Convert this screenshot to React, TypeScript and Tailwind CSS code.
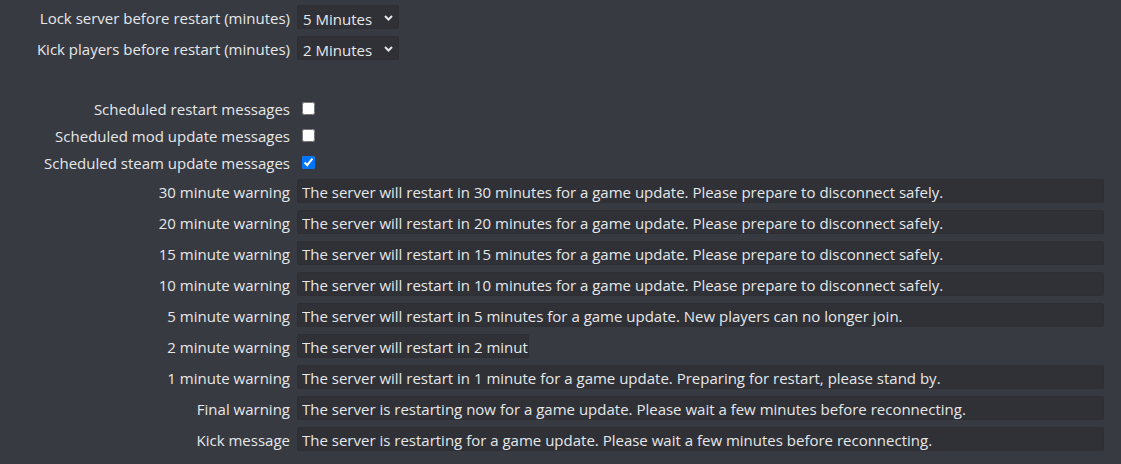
import { useState } from "react";

const font = { fontFamily: '"Open Sans", "Noto Sans", sans-serif' };

const warnings: { label: string; text: string; short?: boolean }[] = [
  { label: "30 minute warning", text: "The server will restart in 30 minutes for a game update. Please prepare to disconnect safely." },
  { label: "20 minute warning", text: "The server will restart in 20 minutes for a game update. Please prepare to disconnect safely." },
  { label: "15 minute warning", text: "The server will restart in 15 minutes for a game update. Please prepare to disconnect safely." },
  { label: "10 minute warning", text: "The server will restart in 10 minutes for a game update. Please prepare to disconnect safely." },
  { label: "5 minute warning", text: "The server will restart in 5 minutes for a game update. New players can no longer join." },
  { label: "2 minute warning", text: "The server will restart in 2 minut", short: true },
  { label: "1 minute warning", text: "The server will restart in 1 minute for a game update. Preparing for restart, please stand by." },
  { label: "Final warning", text: "The server is restarting now for a game update. Please wait a few minutes before reconnecting." },
  { label: "Kick message", text: "The server is restarting for a game update. Please wait a few minutes before reconnecting." },
];

function Row({ label, children, h = "h-6" }: { label: string; children?: React.ReactNode; h?: string }) {
  return (
    <div className={`flex items-center gap-[7px] ${h}`}>
      <label className="w-[290px] shrink-0 text-right whitespace-nowrap pt-[3px]">{label}</label>
      {children}
    </div>
  );
}

function Select({ value, options }: { value: string; options: string[] }) {
  const [v, setV] = useState(value);
  return (
    <div className="relative h-6 w-[102px]">
      <select
        value={v}
        onChange={(e) => setV(e.target.value)}
        className="h-full w-full appearance-none rounded-[2px] border border-[#2d2f34] bg-[#2f3137] pl-[5px] pt-[2px] text-[15px] text-[#e6e7e9] outline-none"
        style={font}
      >
        {options.map((o) => (
          <option key={o}>{o}</option>
        ))}
      </select>
      <svg
        className="pointer-events-none absolute right-[6px] top-[10px]"
        width="9"
        height="6"
        viewBox="0 0 9 6"
        fill="none"
        stroke="#e6e7e9"
        strokeWidth="2"
      >
        <path d="M1 1l3.5 3.5L8 1" />
      </svg>
    </div>
  );
}

export default function App() {
  const [checks, setChecks] = useState([false, false, true]);
  const [texts, setTexts] = useState(warnings.map((w) => w.text));
  const minutes = ["1 Minute", "2 Minutes", "5 Minutes", "10 Minutes", "15 Minutes"];
  const checkLabels = [
    "Scheduled restart messages",
    "Scheduled mod update messages",
    "Scheduled steam update messages",
  ];

  return (
    <div className="min-h-[464px] w-full bg-[#373a41] pt-[5px] text-[15px] text-[#e6e7e9]" style={font}>
      <div className="flex flex-col gap-[7px]">
        <Row label="Lock server before restart (minutes)">
          <Select value="5 Minutes" options={minutes} />
        </Row>
        <Row label="Kick players before restart (minutes)">
          <Select value="2 Minutes" options={minutes} />
        </Row>
        <div className="h-6" />
        {checkLabels.map((l, i) => (
          <Row key={l} label={l} h="h-5">
            <input
              type="checkbox"
              checked={checks[i]}
              onChange={() => setChecks(checks.map((c, j) => (j === i ? !c : c)))}
              className="m-0 ml-[5px] h-[13px] w-[13px]"
            />
          </Row>
        ))}
        {warnings.map((w, i) => (
          <Row key={w.label} label={w.label}>
            <input
              type="text"
              value={texts[i]}
              onChange={(e) => setTexts(texts.map((t, j) => (j === i ? e.target.value : t)))}
              className={`h-6 ${w.short ? "w-[232px] pr-0" : "w-[807px] pr-[4px]"} rounded-[2px] border border-[#2d2f34] bg-[#2f3137] pl-[4px] pt-[2px] text-[15px] text-[#e6e7e9] outline-none`}
              style={font}
            />
          </Row>
        ))}
      </div>
    </div>
  );
}
